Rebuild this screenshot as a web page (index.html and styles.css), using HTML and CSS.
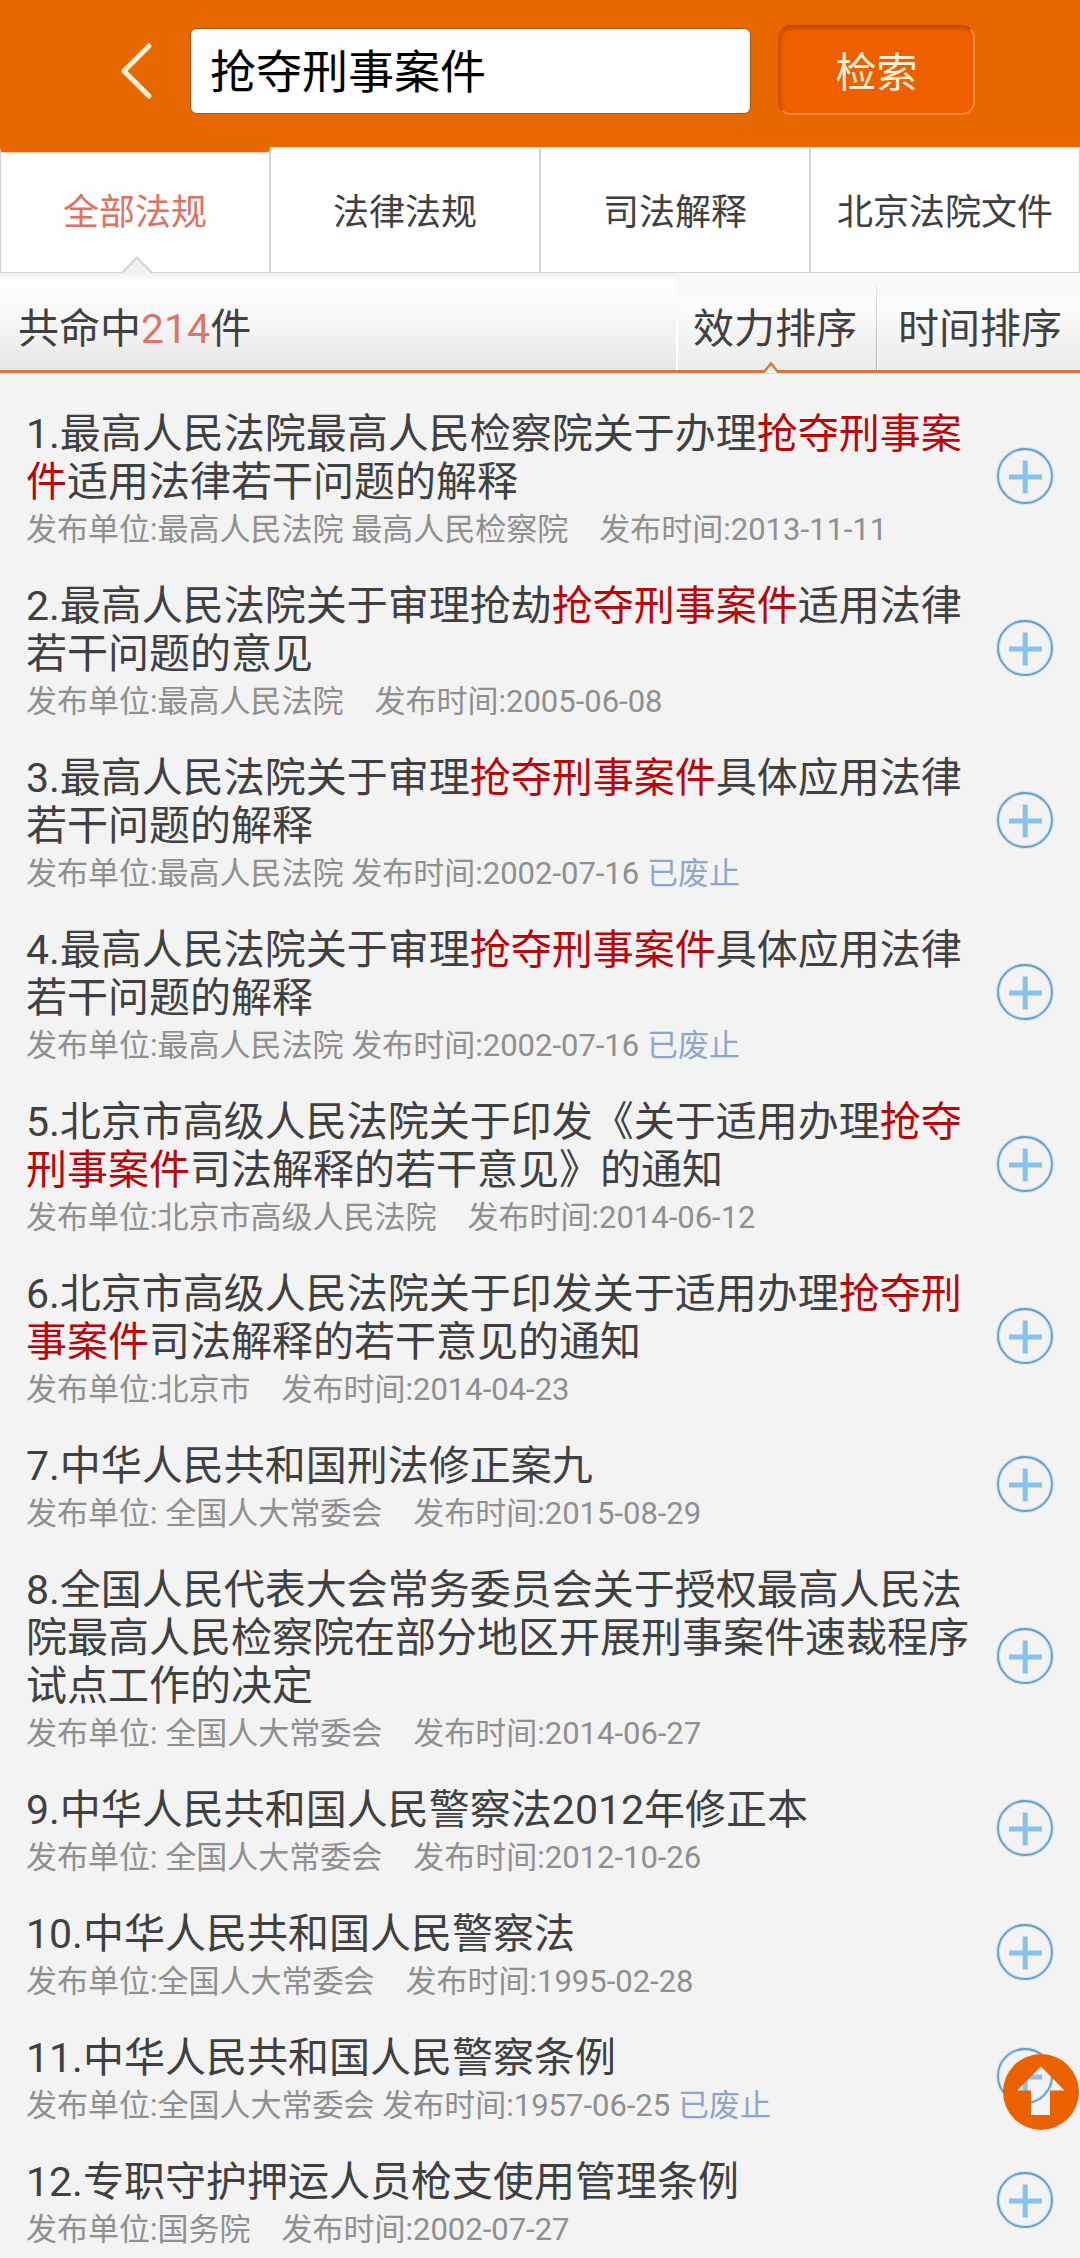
FILE: index.html
```html
<!DOCTYPE html>
<html lang="zh-CN">
<head>
<meta charset="utf-8">
<title>法规检索</title>
<link rel="stylesheet" href="styles.css">
</head>
<body>
<svg width="0" height="0" class="defs"><defs>
<symbol id="plus" viewBox="0 0 60 60"><circle cx="30" cy="30" r="27" fill="none" stroke="#c9e6f8" stroke-width="4"/><circle cx="30" cy="30" r="27" fill="none" stroke="#6d9dbb" stroke-width="1.8"/><path d="M14 31h33M30.200 14.500v33" fill="none" stroke="#86c3ea" stroke-width="5"/></symbol>
</defs></svg>
<header class="header">
  <svg class="back" viewBox="0 0 34 60"><path d="M30 5 5 30 30 55" fill="none" stroke="#fff2d8" stroke-width="5" stroke-linejoin="round" stroke-linecap="round"/></svg>
  <div class="field">抢夺刑事案件</div>
  <div class="button">检索</div>
</header>
<nav class="tabs">
  <div class="tab active">全部法规<svg class="notch" viewBox="0 0 32 18"><path d="M1 18 16 2 31 18Z" fill="#f1f1f1"/><path d="M1 17 16 1.500 31 17" fill="none" stroke="#d3d3d3" stroke-width="2"/></svg></div>
  <div class="tab">法律法规</div>
  <div class="tab">司法解释</div>
  <div class="tab">北京法院文件</div>
</nav>
<section class="bar">
  <div class="count">共命中<b>214</b>件</div>
  <div class="sort first">效力排序<svg class="caret" viewBox="0 0 18 12"><path d="M1 11 9 2 17 11V12H1Z" fill="#f3f3f3"/><path d="M0 11H2L9 2.500 16 11H18" fill="none" stroke="#d9763f" stroke-width="2.400"/></svg></div>
  <div class="sort">时间排序</div>
</section>
<main class="list">
  <article class="item"><div class="text"><h2>1.最高人民法院最高人民检察院关于办理<em>抢夺刑事案件</em>适用法律若干问题的解释</h2><p>发布单位:最高人民法院 最高人民检察院&#12288;发布时间:2013-11-11</p></div><svg class="add"><use href="#plus"/></svg></article>
  <article class="item"><div class="text"><h2>2.最高人民法院关于审理抢劫<em>抢夺刑事案件</em>适用法律若干问题的意见</h2><p>发布单位:最高人民法院&#12288;发布时间:2005-06-08</p></div><svg class="add"><use href="#plus"/></svg></article>
  <article class="item"><div class="text"><h2>3.最高人民法院关于审理<em>抢夺刑事案件</em>具体应用法律若干问题的解释</h2><p>发布单位:最高人民法院 发布时间:2002-07-16 <i>已废止</i></p></div><svg class="add"><use href="#plus"/></svg></article>
  <article class="item"><div class="text"><h2>4.最高人民法院关于审理<em>抢夺刑事案件</em>具体应用法律若干问题的解释</h2><p>发布单位:最高人民法院 发布时间:2002-07-16 <i>已废止</i></p></div><svg class="add"><use href="#plus"/></svg></article>
  <article class="item"><div class="text"><h2>5.北京市高级人民法院关于印发《关于适用办理<em>抢夺刑事案件</em>司法解释的若干意见》的通知</h2><p>发布单位:北京市高级人民法院&#12288;发布时间:2014-06-12</p></div><svg class="add"><use href="#plus"/></svg></article>
  <article class="item"><div class="text"><h2>6.北京市高级人民法院关于印发关于适用办理<em>抢夺刑事案件</em>司法解释的若干意见的通知</h2><p>发布单位:北京市&#12288;发布时间:2014-04-23</p></div><svg class="add"><use href="#plus"/></svg></article>
  <article class="item"><div class="text"><h2>7.中华人民共和国刑法修正案九</h2><p>发布单位: 全国人大常委会&#12288;发布时间:2015-08-29</p></div><svg class="add"><use href="#plus"/></svg></article>
  <article class="item"><div class="text"><h2>8.全国人民代表大会常务委员会关于授权最高人民法院最高人民检察院在部分地区开展刑事案件速裁程序试点工作的决定</h2><p>发布单位: 全国人大常委会&#12288;发布时间:2014-06-27</p></div><svg class="add"><use href="#plus"/></svg></article>
  <article class="item"><div class="text"><h2>9.中华人民共和国人民警察法2012年修正本</h2><p>发布单位: 全国人大常委会&#12288;发布时间:2012-10-26</p></div><svg class="add"><use href="#plus"/></svg></article>
  <article class="item"><div class="text"><h2>10.中华人民共和国人民警察法</h2><p>发布单位:全国人大常委会&#12288;发布时间:1995-02-28</p></div><svg class="add"><use href="#plus"/></svg></article>
  <article class="item"><div class="text"><h2>11.中华人民共和国人民警察条例</h2><p>发布单位:全国人大常委会 发布时间:1957-06-25 <i>已废止</i></p></div><svg class="add"><use href="#plus"/></svg></article>
  <article class="item"><div class="text"><h2>12.专职守护押运人员枪支使用管理条例</h2><p>发布单位:国务院&#12288;发布时间:2002-07-27</p></div><svg class="add"><use href="#plus"/></svg></article>
</main>
<svg class="to-top" viewBox="0 0 76 76"><path fill="#eb6100" fill-rule="evenodd" d="M38 0a38 38 0 1 0 0 76a38 38 0 1 0 0-76ZM38 12.500 14 36.500H28V61H47V36.500H61.500Z"/></svg>
</body>
</html>
```

FILE: styles.css
```css
* { box-sizing: border-box; margin: 0; padding: 0; }
body {
  width: 1080px;
  height: 2258px;
  position: relative;
  overflow: hidden;
  background: #f3f3f3;
  color: #404040;
  font-family: Roboto, "Noto Sans CJK SC", sans-serif;
}
svg { display: block; flex: none; }
.defs { position: absolute; }
.header {
  height: 147px;
  padding: 25px 0 0 119px;
  display: flex;
  align-items: flex-start;
  background: #e86800;
}
.back { width: 34px; height: 60px; margin-top: 16px; }
.field {
  width: 561px;
  height: 86px;
  margin: 3px 0 0 37px;
  padding-left: 19px;
  border: 1px solid #a55310;
  border-radius: 7px;
  background: #fefefe;
  color: #000;
  font-size: 46px;
  line-height: 87px;
}
.button {
  width: 197px;
  height: 90px;
  margin-left: 27px;
  border: 2px solid;
  border-color: #c24a00 #fa8438 #fa8438 #d45000;
  border-radius: 13px;
  background: #ee5f00;
  box-shadow: inset 1px 2px 3px #c94c00;
  color: #fff3da;
  font-size: 41px;
  line-height: 92px;
  text-align: center;
}
.tabs { display: grid; grid-template-columns: repeat(4, 1fr); height: 126px; }
.tab {
  position: relative;
  padding-top: 8px;
  border: solid #d3d3d3;
  border-width: 0 1px 1px;
  box-shadow: inset 0 1px #fbd0ab;
  background: #fefefe;
  font-size: 36px;
  line-height: 117px;
  text-align: center;
}
.active { padding-top: 3px; border-top: 5px solid #f26304; color: #e0705f; }
.notch { position: absolute; left: 120px; bottom: -2px; width: 32px; height: 18px; }
.bar {
  display: flex;
  height: 100px;
  border-bottom: 3px solid #d9763f;
  box-shadow: 0 1px #fbd9be;
  background: linear-gradient(#f0f0f0, #fefefe 8%, #f8f8f8 45%, #e7e7e7);
  font-size: 41px;
  line-height: 113px;
}
.count { width: 676px; padding-left: 18px; }
.count b { color: #dc7565; font-weight: 400; }
.sort { position: relative; flex: 1; padding-left: 20px; background: linear-gradient(#f8f8f8, #fbfbfb 35%, #ebebeb); }
.first { flex: 0 0 202px; padding-left: 15px; border: solid; border-width: 0 2px; border-image: linear-gradient(#f8f8f8, #fff) 1; }
.first::after { content: ""; position: absolute; right: -1px; top: 12px; bottom: 0; width: 1px; background: linear-gradient(#e8e8e8, #a9adb8); }
.caret { position: absolute; left: 84px; bottom: -3px; width: 18px; height: 12px; }
.list { padding-top: 37px; }
.item { display: flex; justify-content: space-between; align-items: center; padding: 0 25px 0 26px; margin-bottom: 28px; }
.text { width: 952px; }
.text h2 { font-size: 41px; line-height: 48px; font-weight: 400; }
.text em { font-style: normal; color: #b8060b; }
.text p { font-size: 31px; line-height: 48px; color: #8f8f8f; white-space: pre; }
.text i { font-style: normal; color: #8fa5cb; }
.add { width: 60px; height: 60px; margin-bottom: 12px; }
.to-top { position: absolute; left: 1003px; top: 2054px; width: 76px; height: 76px; }
```
